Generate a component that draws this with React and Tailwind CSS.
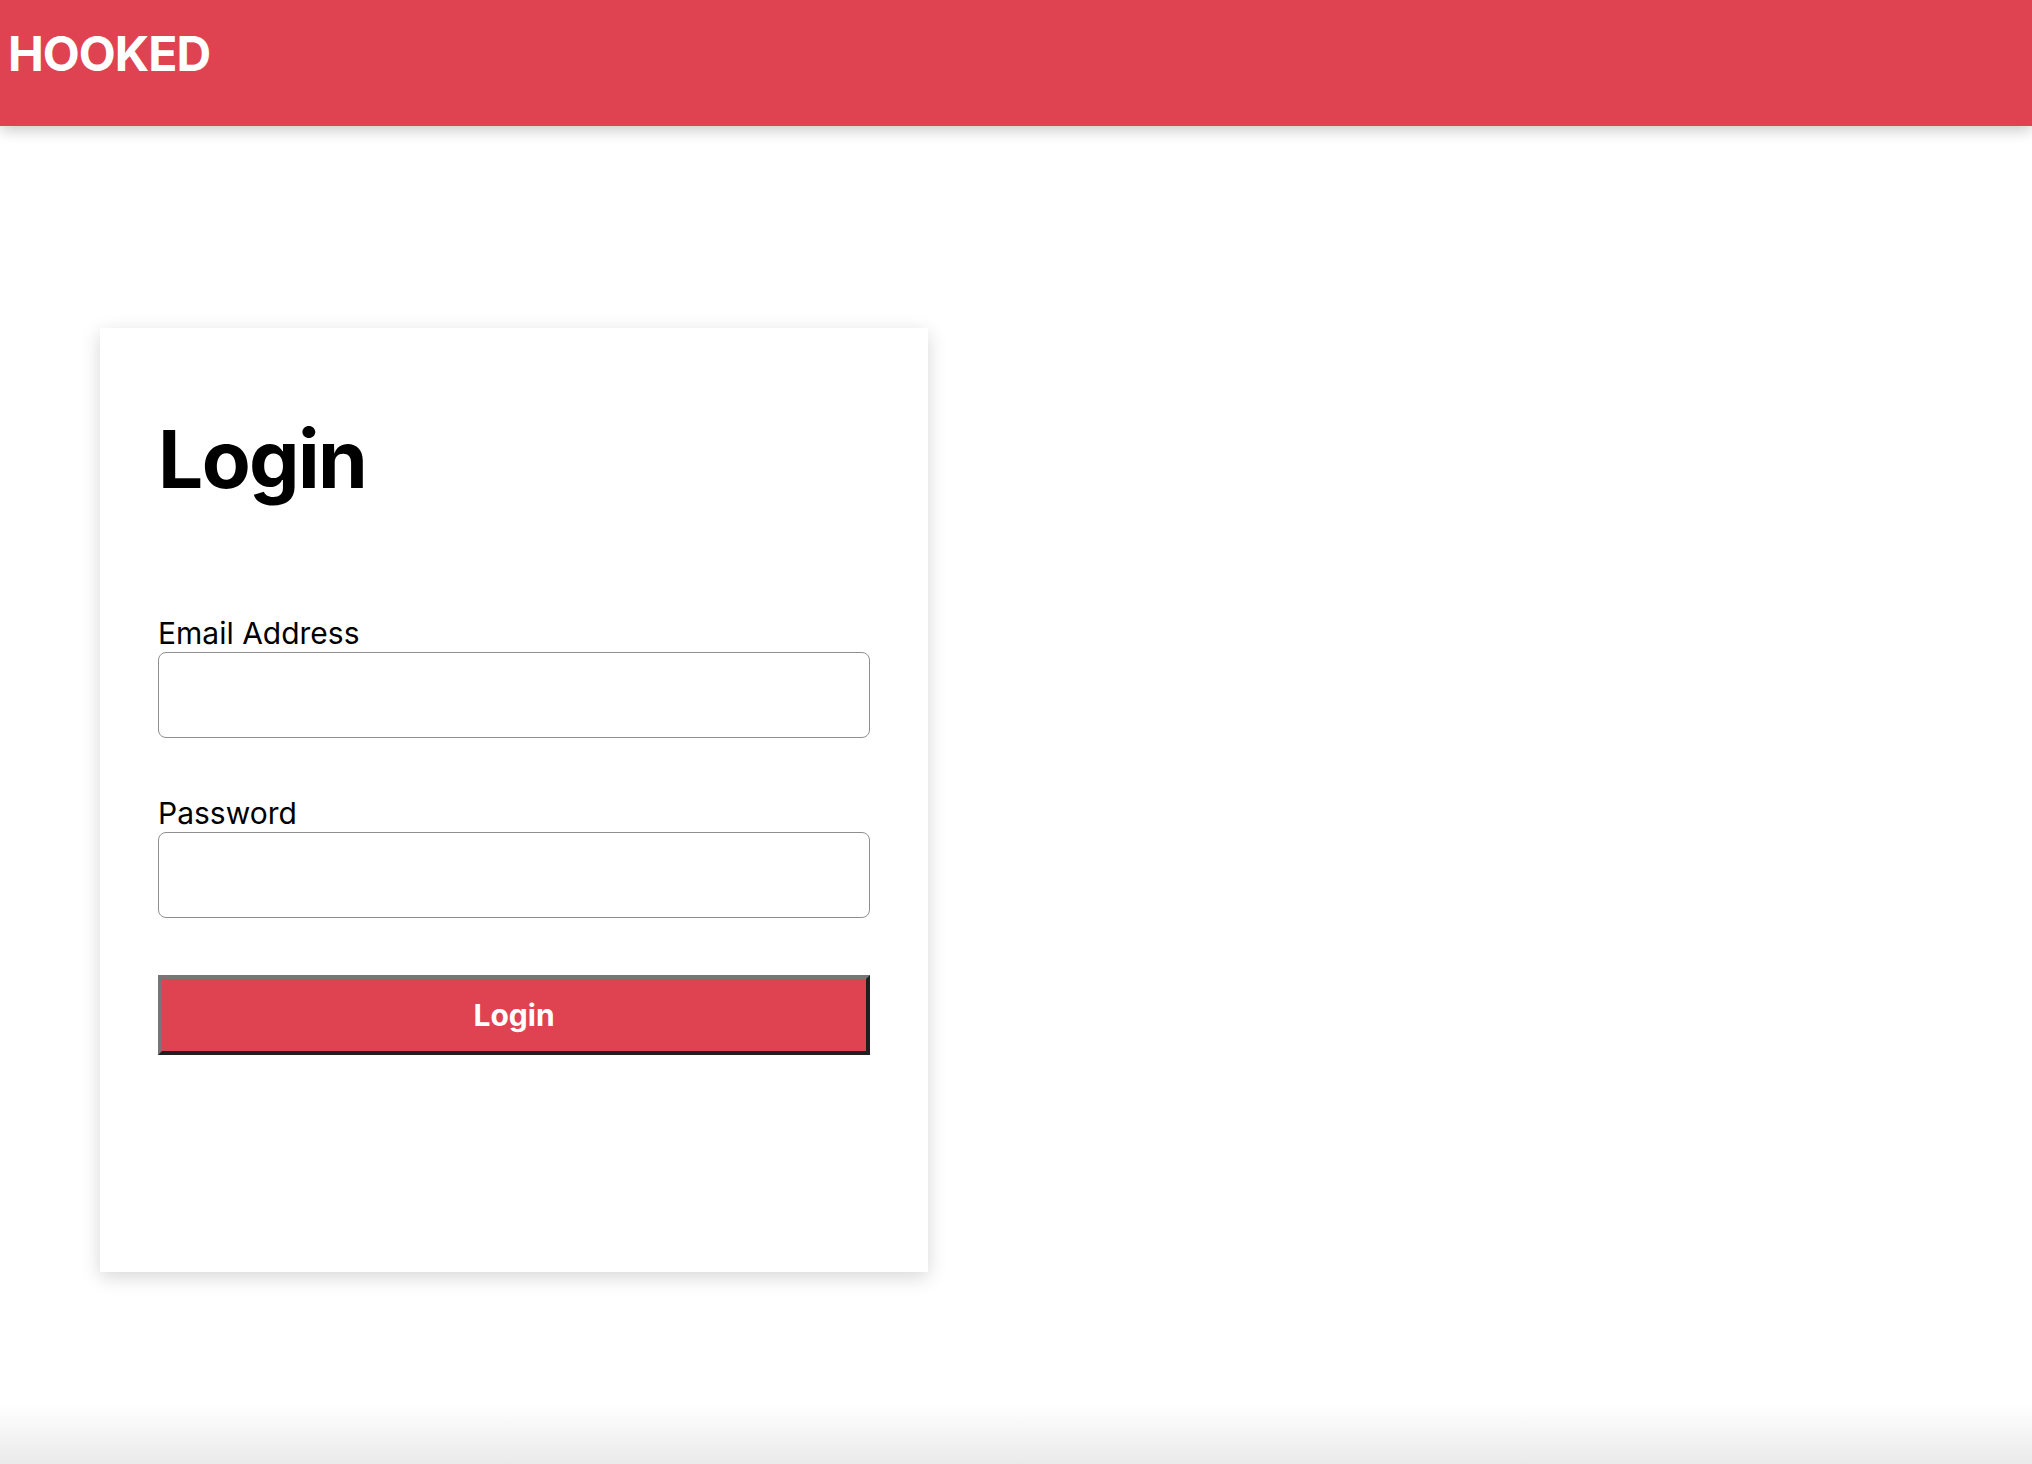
export default function App() {
  return (
    <div className="relative min-h-[1464px] flex flex-col bg-white font-['Inter',_'Liberation_Sans',_sans-serif] text-black">
      <header className="h-[126px] bg-[#df4351] shadow-[0_4px_14px_rgba(0,0,0,0.22)] px-[8px] pt-[25px] relative z-10">
        <div className="text-white text-[48px] font-bold leading-[58px] tracking-[-1px]">HOOKED</div>
      </header>

      <main className="flex-1 pt-[202px] pl-[100px]">
        <div className="w-[828px] h-[944px] bg-white shadow-[0_5px_18px_rgba(0,0,0,0.16)] px-[58px] pt-[83px]">
          <h1 className="text-[80px] font-bold leading-[96px] tracking-[-1.6px]">Login</h1>

          <form className="mt-[108px] flex flex-col" onSubmit={(e) => e.preventDefault()}>
            <label className="text-[30px] leading-[36px] font-normal">Email Address</label>
            <input
              type="email"
              className="mt-px h-[86px] w-full rounded-[8px] border border-[#8f8f8f] bg-white px-3 text-[24px] outline-none"
            />

            <label className="mt-[57px] text-[30px] leading-[36px] font-normal">Password</label>
            <input
              type="password"
              className="mt-px h-[86px] w-full rounded-[8px] border border-[#8f8f8f] bg-white px-3 text-[24px] outline-none"
            />

            <button
              type="submit"
              className="mt-[57px] h-[80px] w-full bg-[#df4351] text-white text-[30px] font-bold border-[4px] border-t-[#767676] border-l-[#767676] border-b-[#1f1f1f] border-r-[#1f1f1f]"
            >
              Login
            </button>
          </form>
        </div>
      </main>

      <div className="h-[60px] bg-gradient-to-b from-white to-[#eaeaea]"></div>
    </div>
  );
}
